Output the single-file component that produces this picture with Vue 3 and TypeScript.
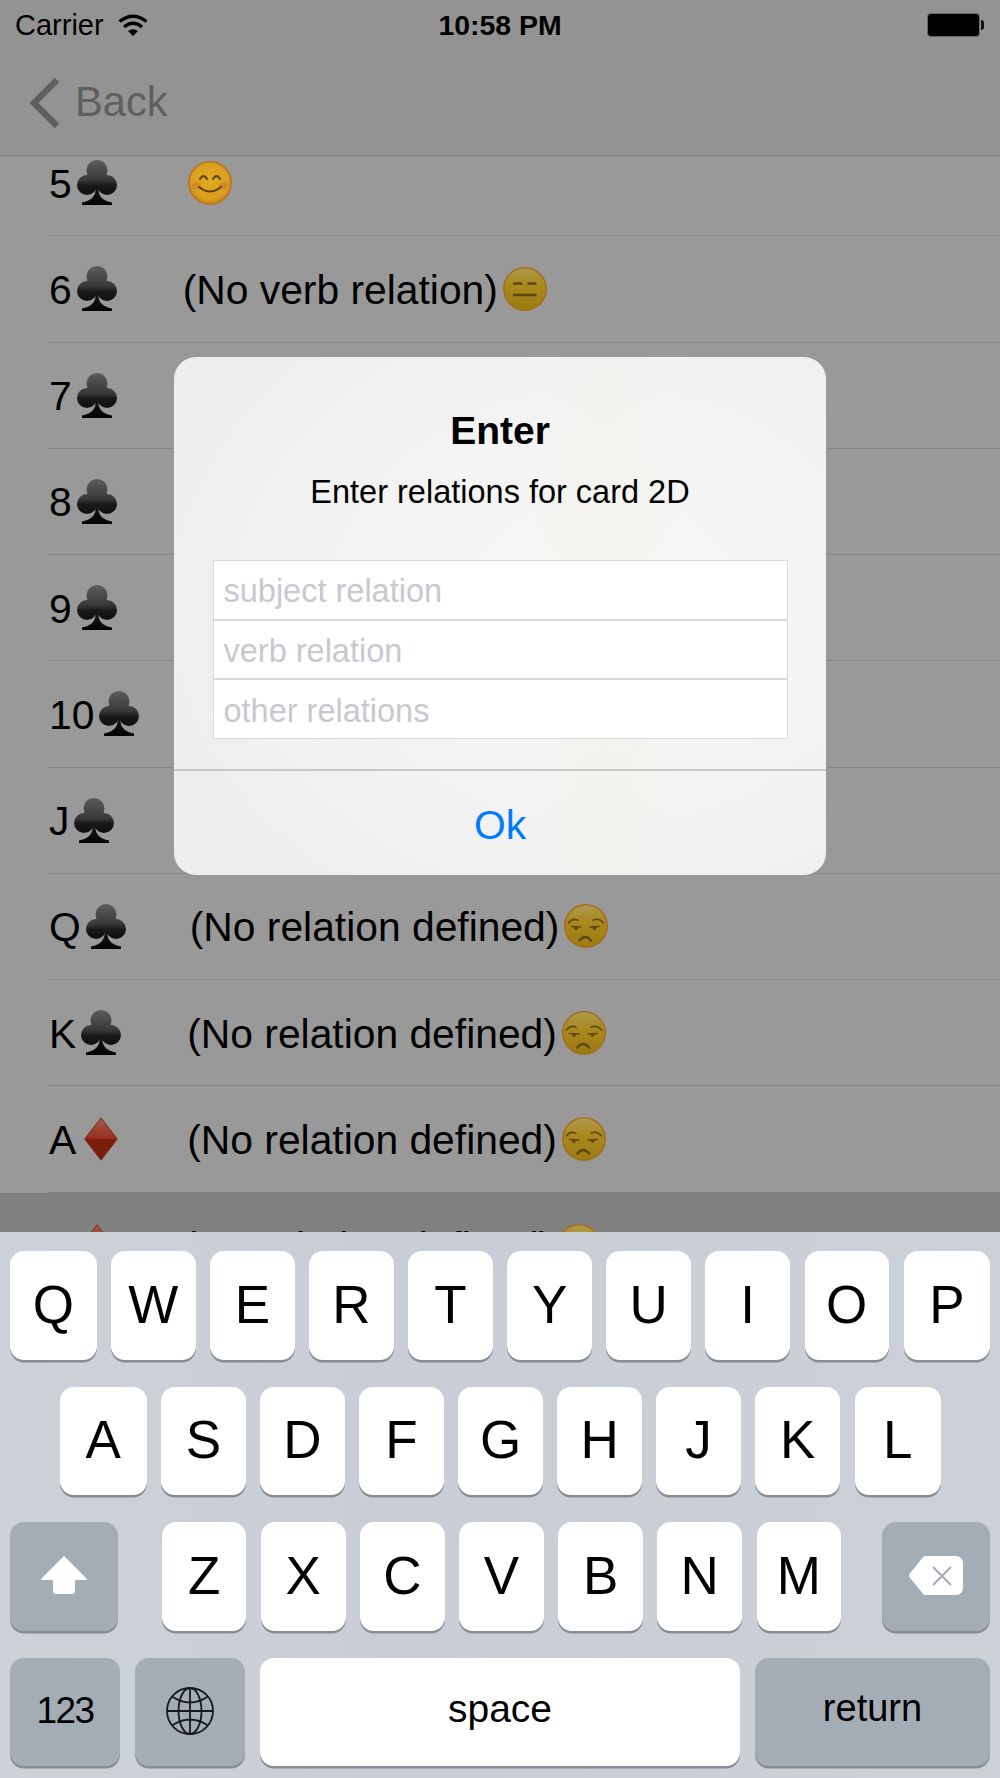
<script setup lang="ts">
interface Row {
  label: string
  suit: "club" | "diamond"
  relation?: string
  emoji?: "smile" | "blank" | "unamused"
  nudge?: number
  selected?: boolean
}

const rows: Row[] = [
  { label: "5", suit: "club", emoji: "smile" },
  { label: "6", suit: "club", relation: "(No verb relation)", emoji: "blank" },
  { label: "7", suit: "club" },
  { label: "8", suit: "club" },
  { label: "9", suit: "club" },
  { label: "10", suit: "club" },
  { label: "J", suit: "club" },
  { label: "Q", suit: "club", relation: "(No relation defined)", emoji: "unamused", nudge: -2 },
  { label: "K", suit: "club", relation: "(No relation defined)", emoji: "unamused" },
  { label: "A", suit: "diamond", relation: "(No relation defined)", emoji: "unamused", nudge: 3 },
  { label: "2", suit: "diamond", relation: "(No relation defined)", emoji: "unamused", nudge: 3, selected: true },
]

const topKeys = ["Q", "W", "E", "R", "T", "Y", "U", "I", "O", "P"]
const homeKeys = ["A", "S", "D", "F", "G", "H", "J", "K", "L"]
const bottomKeys = ["Z", "X", "C", "V", "B", "N", "M"]
</script>

<template>
  <div class="screen">
    <svg class="defs" width="0" height="0">
      <defs>
        <linearGradient id="clubFill" gradientUnits="userSpaceOnUse" x1="0" y1="0" x2="0" y2="45">
          <stop offset="0" stop-color="#5c5c5c" />
          <stop offset="0.45" stop-color="#383838" />
          <stop offset="0.56" stop-color="#1a1a1a" />
          <stop offset="1" stop-color="#030303" />
        </linearGradient>
        <linearGradient id="diamondFill" x1="0" y1="0" x2="0" y2="1">
          <stop offset="0" stop-color="#a85a4c" />
          <stop offset="0.48" stop-color="#96301f" />
          <stop offset="0.52" stop-color="#7b1c0b" />
          <stop offset="1" stop-color="#7a1e0c" />
        </linearGradient>
        <linearGradient id="faceDim" x1="0" y1="0" x2="0" y2="1">
          <stop offset="0" stop-color="#ad9a50" />
          <stop offset="0.4" stop-color="#ab881e" />
          <stop offset="1" stop-color="#9a7c10" />
        </linearGradient>
        <radialGradient id="faceBright" cx="0.5" cy="0.45" r="0.55">
          <stop offset="0" stop-color="#e0ab20" />
          <stop offset="0.8" stop-color="#d99e1f" />
          <stop offset="1" stop-color="#c47c1c" />
        </radialGradient>
      </defs>
    </svg>

    <div class="list">
      <div v-for="row in rows" :key="row.label + row.suit" class="row" :class="{ selected: row.selected }">
        <div class="cell">
          <span class="label">{{ row.label }}</span>
          <svg v-if="row.suit === 'club'" class="suit" width="40" height="45" viewBox="0 0 40 45" fill="url(#clubFill)">
            <circle cx="20" cy="10.500" r="10.500" />
            <circle cx="10" cy="25" r="10" />
            <circle cx="30" cy="25" r="10" />
            <path d="M16 14h8l-2.500 16c0 6 4.500 11 13.500 12.500V45H5v-2.500C14 41 18.500 36 18.500 30z" />
          </svg>
          <svg v-else class="suit diamond" width="34" height="44" viewBox="0 0 34 44">
            <path fill="url(#diamondFill)" stroke="#7d2a1c" stroke-width="1" d="M17 .8 33.300 22 17 43.200.7 22z" />
          </svg>
          <span class="relation" :style="{ marginLeft: 66 + (row.nudge ?? 0) + 'px' }">{{ row.relation }}</span>
          <svg v-if="row.emoji" class="emoji" width="44" height="44" viewBox="0 0 44 44">
            <template v-if="row.emoji === 'smile'">
              <circle cx="22" cy="22" r="21.200" fill="url(#faceBright)" stroke="#b8741c" stroke-width="1.500" />
              <ellipse cx="8" cy="25" rx="5" ry="3.500" fill="#cd7f2c" opacity="0.7" />
              <ellipse cx="36" cy="25" rx="5" ry="3.500" fill="#cd7f2c" opacity="0.7" />
              <path fill="none" stroke="#5e3f10" stroke-width="2" stroke-linecap="round"
                d="M12 18q3.500-6 7 0M25 18q3.500-6 7 0M11 26q11 9 22 0" />
            </template>
            <template v-else-if="row.emoji === 'blank'">
              <circle cx="22" cy="22" r="21.200" fill="url(#faceDim)" stroke="#a86c16" stroke-width="1.500" />
              <path fill="none" stroke="#5c4710" stroke-width="2.600" d="M10 16.500h9M24.500 16.500h9M10 28h23.500" />
            </template>
            <template v-else>
              <circle cx="22" cy="22" r="21.200" fill="url(#faceDim)" stroke="#a86c16" stroke-width="1.500" />
              <path fill="none" stroke="#5c4710" stroke-width="1.500" stroke-linecap="round"
                d="M4.500 19q4-5.500 9.500-2.700M29 16.300q6-2.800 10.500 2.700M7.700 22.500 17 23M26 23l9-.5" />
              <circle cx="12" cy="24" r="1.900" fill="#5c4710" />
              <circle cx="30.500" cy="24" r="1.900" fill="#5c4710" />
              <path fill="none" stroke="#5c4710" stroke-width="2.400" stroke-linecap="round" d="M15.500 36.500q5.500-7 11.500 0" />
            </template>
          </svg>
        </div>
      </div>
    </div>

    <header class="bar">
      <div class="status">
        <div class="carrier">
          <span>Carrier</span>
          <svg width="30" height="22" viewBox="0 0 30 22">
            <path fill="none" stroke="#000" stroke-width="3.200" d="M1.500 7.500Q15-3 28.500 7.500M6 13q9-7.500 18 0" />
            <path d="M10 17q5-3.500 10 0l-5 5z" />
          </svg>
        </div>
        <span class="time">10:58 PM</span>
        <div class="battery"><i></i></div>
      </div>
      <div class="nav">
        <svg width="34" height="52" viewBox="0 0 34 52">
          <path fill="none" stroke="#5f5f5f" stroke-width="6.500" d="M29 3 6 26l23 23" />
        </svg>
        <span>Back</span>
      </div>
    </header>

    <div class="alert-wrap">
      <div class="alert">
        <div class="alert-title">Enter</div>
        <div class="alert-message">Enter relations for card 2D</div>
        <div class="fields">
          <input class="field" placeholder="subject relation" />
          <input class="field" placeholder="verb relation" />
          <input class="field" placeholder="other relations" />
        </div>
        <div class="alert-button">Ok</div>
      </div>
    </div>

    <div class="keyboard">
      <div class="key-row">
        <div v-for="k in topKeys" :key="k" class="key">{{ k }}</div>
      </div>
      <div class="key-row home">
        <div v-for="k in homeKeys" :key="k" class="key">{{ k }}</div>
      </div>
      <div class="key-row third">
        <div class="key dark side">
          <svg width="46" height="38" viewBox="0 0 46 38">
            <path fill="#fff" d="M23 0 45.500 22.600c.5.600.2 1.400-.6 1.400H34v10.500a3.500 3.500 0 0 1-3.500 3.500h-15a3.500 3.500 0 0 1-3.500-3.500V24H1.100c-.8 0-1.100-.8-.6-1.400z" />
          </svg>
        </div>
        <div class="letters">
          <div v-for="k in bottomKeys" :key="k" class="key">{{ k }}</div>
        </div>
        <div class="key dark side">
          <svg width="54" height="39" viewBox="0 0 54 39">
            <path fill="#fff" d="M17 0h30a7 7 0 0 1 7 7v25a7 7 0 0 1-7 7H17a4 4 0 0 1-3-1.300L1 21.800a3.500 3.500 0 0 1 0-4.600L14 1.300A4 4 0 0 1 17 0z" />
            <path fill="none" stroke="#a4adb6" stroke-width="2.200" d="M24 11l18 18M42 11 24 29" />
          </svg>
        </div>
      </div>
      <div class="key-row last">
        <div class="key dark small num">123</div>
        <div class="key dark small">
          <svg width="48" height="48" viewBox="0 0 48 48" fill="none" stroke="#161a1e" stroke-width="1.800">
            <circle cx="24" cy="24" r="23" />
            <ellipse cx="24" cy="24" rx="11.500" ry="23" />
            <path d="M24 1v46M1 24h46M6 9.500q18 12 36 0M6 38.500q18-12 36 0" />
          </svg>
        </div>
        <div class="key space">space</div>
        <div class="key dark return">return</div>
      </div>
    </div>
  </div>
</template>

<style scoped>
.screen {
  position: relative;
  width: 1000px;
  height: 1778px;
  overflow: hidden;
  background: #999;
  color: #000;
  font-family: "Liberation Sans", Arial, sans-serif;
}

.defs {
  position: absolute;
}

.list {
  padding-top: 130px;
}

.row.selected {
  background: #808080;
}

.cell {
  display: flex;
  align-items: center;
  box-sizing: border-box;
  height: 106.25px;
  margin-left: 48px;
  border-bottom: 1px solid #858585;
  font-size: 40.8px;
}

.selected .cell {
  border-bottom: 0;
}

.label {
  padding: 3px 0 0 1px;
}

.suit {
  margin-left: 5px;
  flex: none;
}

.suit.diamond {
  margin-left: 8px;
}

.relation {
  padding-top: 3px;
  white-space: nowrap;
}

.emoji {
  margin-left: 5px;
  flex: none;
}

.bar {
  position: absolute;
  top: 0;
  left: 0;
  right: 0;
  height: 155px;
  background: #939393;
  border-bottom: 1.500px solid #7f7f7f;
}

.status {
  display: grid;
  grid-template-columns: 1fr auto 1fr;
  align-items: center;
  height: 50px;
  padding: 0 15px;
}

.carrier {
  display: flex;
  align-items: center;
  gap: 14px;
  font-size: 29px;
}

.time {
  font-size: 28.400px;
  font-weight: 700;
}

.battery {
  justify-self: end;
  position: relative;
  box-sizing: border-box;
  width: 53px;
  height: 24px;
  margin-right: 5px;
  background: #000;
  border: 1px solid #666;
  border-radius: 4px;
}

.battery i {
  position: absolute;
  top: 6px;
  right: -5px;
  width: 3px;
  height: 10px;
  background: #111;
  border-radius: 0 3px 3px 0;
}

.nav {
  display: flex;
  align-items: center;
  gap: 13px;
  height: 103px;
  padding-left: 28px;
  color: #5f5f5f;
  font-size: 41.600px;
}

.nav svg {
  margin-top: 2px;
}

.alert-wrap {
  position: absolute;
  top: 357px;
  left: 0;
  right: 0;
  display: flex;
  justify-content: center;
}

.alert {
  width: 652px;
  height: 518px;
  border-radius: 22px;
  background:
    radial-gradient(ellipse 12% 75% at 66% 55%, rgba(240, 238, 218, 0.4), rgba(241, 239, 220, 0)),
    radial-gradient(ellipse 70% 70% at 66% 48%, #f8f8f7 0%, #f4f4f4 45%, #eeeeee 100%);
  overflow: hidden;
}

.alert-title {
  padding-top: 51px;
  font-size: 39px;
  font-weight: 700;
  line-height: 46px;
  text-align: center;
}

.alert-message {
  margin-top: 18px;
  font-size: 32.500px;
  line-height: 40px;
  text-align: center;
}

.fields {
  display: flex;
  flex-direction: column;
  margin: 48px 38.500px 30px;
}

.field {
  box-sizing: border-box;
  display: block;
  width: 100%;
  height: 59.700px;
  margin: 0;
  padding: 4px 0 0 10px;
  background: #fff;
  border: 1px solid #d9d9d9;
  border-radius: 0;
  outline: 0;
  font-family: inherit;
  font-size: 32.500px;
}

.field::placeholder {
  color: #c8c8ce;
  opacity: 1;
}

.alert-button {
  height: 106px;
  border-top: 2px solid #c8c8c8;
  color: #007aff;
  font-size: 40.800px;
  line-height: 108px;
  text-align: center;
}

.keyboard {
  position: absolute;
  top: 1232px;
  left: 0;
  right: 0;
  bottom: 0;
  display: flex;
  flex-direction: column;
  gap: 27px;
  box-sizing: border-box;
  padding: 19px 10px 0;
  background: linear-gradient(90deg, #cdd2d9, #c9ced6 40%, #cbd1d6);
}

.key-row {
  display: flex;
  gap: 14.700px;
}

.key-row.home {
  padding: 0 49px 0 50px;
}

.key-row.third {
  gap: 0;
}

.key-row.last {
  gap: 15px;
}

.letters {
  display: flex;
  flex: 0 0 679px;
  gap: 14.700px;
  margin: 0 auto 0 44px;
}

.key {
  display: flex;
  flex: 1;
  align-items: center;
  justify-content: center;
  box-sizing: border-box;
  height: 108.500px;
  padding-bottom: 2px;
  background: #fff;
  border-radius: 14px;
  box-shadow: 0 2.500px 0 #888d93;
  font-size: 53px;
}

.key-row > .key:first-child:not(.dark),
.key-row > .key:last-child:not(.dark) {
  flex: 0 0 86.500px;
}

.key.dark {
  background: #a4adb6;
}

.key.side {
  flex: 0 0 108px;
}

.key.small {
  flex: 0 0 110px;
}

.key.num {
  font-size: 37px;
  letter-spacing: -1.500px;
}

.key.space {
  flex: 0 0 480px;
  padding-bottom: 5px;
  font-size: 39px;
}

.key.return {
  flex: 1;
  padding-bottom: 6px;
  font-size: 38px;
}
</style>
